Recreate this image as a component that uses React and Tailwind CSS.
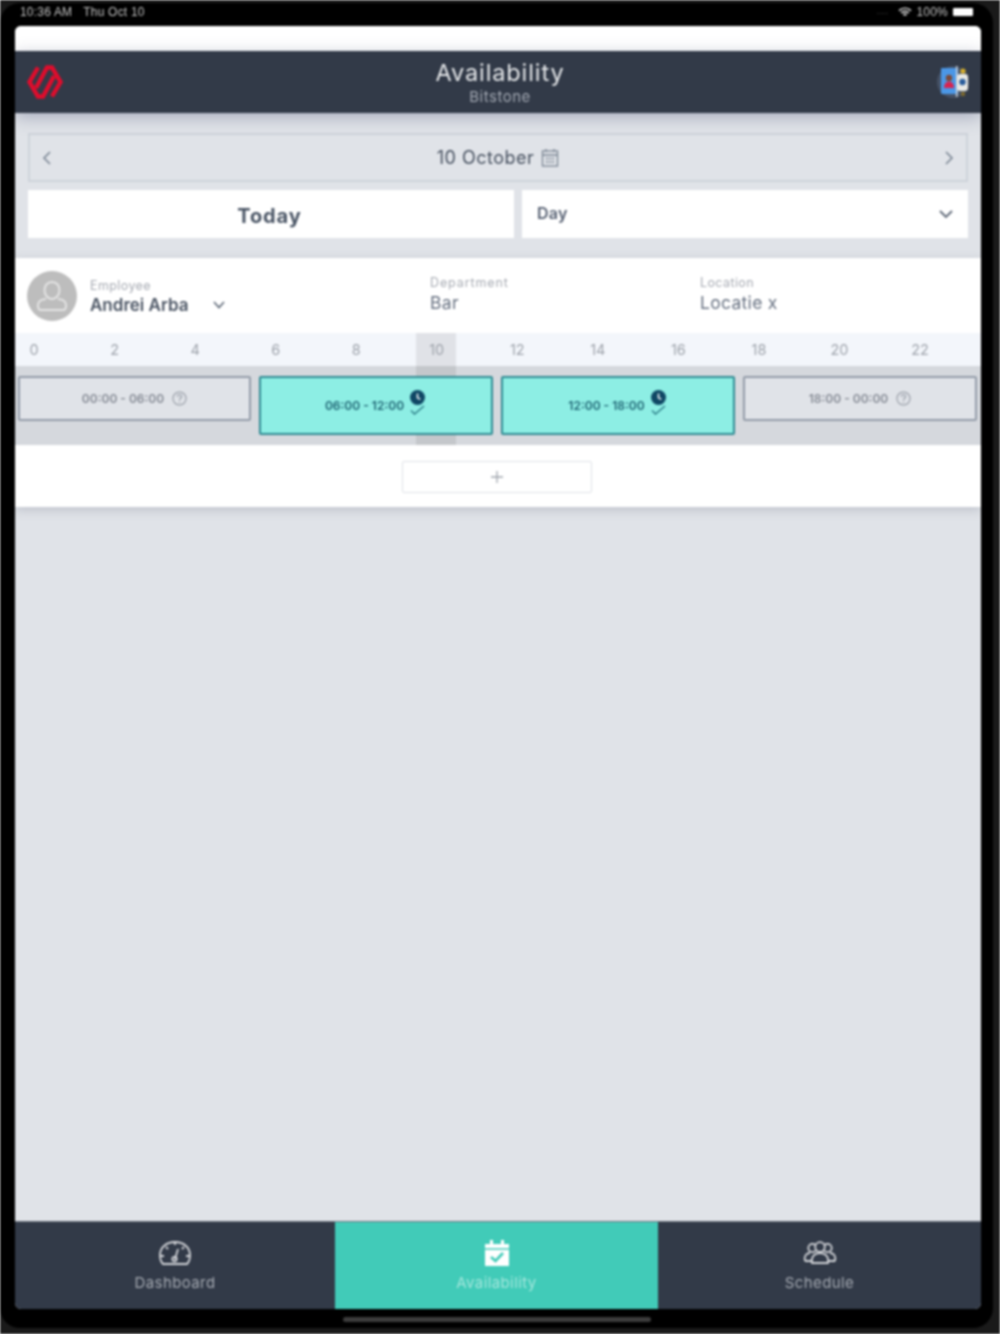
import React from "react";

const font = "font-['Inter','Noto_Sans',sans-serif]";

function Logo() {
  return (
    <svg width="40" height="40" viewBox="26 63 40 40" fill="none" stroke="#e00c2c" strokeWidth="4.400" strokeLinejoin="miter">
      <path d="M39 68.500 L30.500 83 L39 97.500 H44 L55 77" />
      <path d="M53 97.500 L61.500 83 L53 68.500 H48 L37 89" />
    </svg>
  );
}

function AppBadge() {
  return (
    <svg width="36" height="34" viewBox="0 0 36 34">
      <circle cx="17" cy="17" r="16" fill="#465266" />
      <rect x="5" y="3" width="17" height="26" rx="1" fill="#4b97e6" />
      <circle cx="13" cy="13" r="3.200" fill="#7a4a3a" />
      <path d="M8 23c0-4 2-6.500 5-6.500s5 2.500 5 6.500z" fill="#d8234f" />
      <rect x="21" y="9" width="11" height="17" rx="3" fill="#e8e8e4" />
      <circle cx="26.500" cy="17" r="3.200" fill="#2a5d9c" />
      <circle cx="27" cy="6" r="2.600" fill="#d9b02c" />
      <circle cx="27" cy="29" r="2.200" fill="#7f6a2e" />
      <rect x="20" y="1" width="1.500" height="31" fill="#cfd3d8" />
    </svg>
  );
}

function ClockCheck() {
  return (
    <div className="flex flex-col items-center -mt-[6px]">
      <svg width="15" height="15" viewBox="0 0 16 16">
        <circle cx="8" cy="8" r="8" fill="#0f4764" />
        <path d="M8 3.600V8.400L11 10" stroke="#fff" strokeWidth="1.600" fill="none" />
      </svg>
      <svg width="15" height="10" viewBox="0 0 15 10" fill="none" stroke="#2a7a85" strokeWidth="1.300">
        <path d="M1 5.500 L4.500 9 L14 1" />
      </svg>
    </div>
  );
}

function Question() {
  return (
    <svg width="15" height="15" viewBox="0 0 16 16" fill="none" stroke="#8f959f" strokeWidth="1.100">
      <circle cx="8" cy="8" r="7" />
      <path d="M5.800 6.200c0-1.300 1-2.100 2.200-2.100s2.200.8 2.200 2c0 1.600-2.200 1.700-2.200 3.400" />
      <path d="M8 11v1.200" />
    </svg>
  );
}

function GreySlot({ label }) {
  return (
    <div className="h-[45px] bg-[#e0e3e8] border-2 border-[#939ba8] rounded-[2px] flex items-center justify-center gap-2 text-[12px] font-semibold text-[#868b95]">
      <span>{label}</span>
      <Question />
    </div>
  );
}

function TealSlot({ label }) {
  return (
    <div className="h-[59px] bg-[#8deee4] border-2 border-[#2f8a92] rounded-[2px] flex items-center justify-center gap-[6px] text-[12px] font-semibold text-[#1f6473] pr-[2px]">
      <span>{label}</span>
      <ClockCheck />
    </div>
  );
}

function Field({ label, value, width, track }) {
  return (
    <div className={width}>
      <div className={`text-[12.500px] leading-[15px] ${track} text-[#a6aab2]`}>{label}</div>
      <div className="text-[17.500px] leading-[26px] tracking-[0.3px] text-[#667080]">{value}</div>
    </div>
  );
}

const hours = [0, 2, 4, 6, 8, 10, 12, 14, 16, 18, 20, 22];

export default function App() {
  return (
    <div className={`w-[1000px] h-[1334px] bg-[#1a1a1a] pt-[3px] pr-[7px] pb-[6px] overflow-hidden ${font} blur-[0.8px]`}>
      <div className="h-full bg-black rounded-[20px] flex flex-col">
        <div className="h-[23px] pl-[20px] pr-[20px] flex items-center justify-between font-['Liberation_Sans',sans-serif] text-[12px] tracking-[0.2px] text-[#c4c4c4]">
          <div className="flex gap-[11px] -mt-[5px]">
            <span>10:36 AM</span>
            <span>Thu Oct 10</span>
          </div>
          <div className="flex items-center gap-[5px] -mt-[5px]">
            <span className="text-[#555] text-[9px] tracking-wider mr-[4px]">....</span>
            <svg width="14" height="11" viewBox="0 0 14 11" fill="none" stroke="#e5e5e5" strokeWidth="1.600">
              <path d="M1 3.600C4.600.4 9.400.4 13 3.600" />
              <path d="M3.200 5.900C5.600 3.900 8.400 3.900 10.800 5.900" />
              <path d="M5.400 8.100C6.500 7.200 7.500 7.200 8.600 8.100" />
            </svg>
            <span>100%</span>
            <div className="w-[20px] h-[8px] bg-white rounded-[1px]" />
          </div>
        </div>

        <div className="ml-[15px] mr-[12px] h-[1283px] flex flex-col rounded-t-[6px] rounded-b-[6px] overflow-hidden bg-[#e0e3e8]">
          <div className="h-[25px] bg-white shrink-0" />
          <header className="relative z-10 h-[62px] shrink-0 bg-[#323a48] flex items-center pl-[10px] pr-[9px] shadow-[0_4px_16px_rgba(60,70,110,0.35)]">
            <div className="w-[42px]"><Logo /></div>
            <div className="flex-1 text-center pr-[3px] pt-[2px]">
              <div className="text-[23.500px] leading-[28px] tracking-[0.9px] text-[#e6e8ea]">Availability</div>
              <div className="text-[15px] leading-[20px] tracking-[0.5px] text-[#a2a8b2]">Bitstone</div>
            </div>
            <div className="w-[36px]"><AppBadge /></div>
          </header>

          <main className="flex-1 flex flex-col">
            <div className="pt-[20px] pl-[13px] pr-[13px] pb-[20px]">
              <div className="h-[49px] border-2 border-[#ced3da] flex items-center justify-between px-[11px]">
                <svg width="12" height="16" viewBox="0 0 12 16" fill="none" stroke="#7a8593" strokeWidth="1.600"><path d="M9 2 L3 8 L9 14" /></svg>
                <div className="flex items-center gap-[7px] text-[18px] tracking-[0.5px] text-[#46505f]">
                  <span>10 October</span>
                  <svg width="18" height="19" viewBox="0 0 18 19" fill="none" stroke="#7a8593" strokeWidth="1.300">
                    <rect x="1.500" y="3" width="15" height="15" />
                    <path d="M1.500 7H16.500M5 1V4M13 1V4M5 10.500H7M8 10.500H10M11 10.500H13M5 14H7M8 14H10M11 14H13" />
                  </svg>
                </div>
                <svg width="12" height="16" viewBox="0 0 12 16" fill="none" stroke="#7a8593" strokeWidth="1.600"><path d="M3 2 L9 8 L3 14" /></svg>
              </div>
              <div className="mt-[8px] flex gap-[8px] h-[48px]">
                <div className="w-[486px] bg-white flex items-center justify-center text-[20px] font-bold tracking-[0.9px] text-[#4a5565] pt-[3px] pr-[3px]">Today</div>
                <div className="flex-1 bg-white flex items-center justify-between pl-[15px] pr-[14px] text-[16px] tracking-[0.3px] font-semibold text-[#566072]">
                  <span className="-mt-[2px]">Day</span>
                  <svg width="16" height="12" viewBox="0 0 16 12" fill="none" stroke="#5c6675" strokeWidth="1.800"><path d="M2 3 L8 9 L14 3" /></svg>
                </div>
              </div>
            </div>

            <section className="relative bg-white shadow-[0_3px_10px_rgba(90,100,120,0.25)]">
              <div className="h-[75px] flex items-center pl-[12px]">
                <div className="w-[50px] h-[50px] rounded-full bg-[#bdbdbd] flex items-center justify-center shrink-0">
                  <svg width="34" height="34" viewBox="0 0 34 34" fill="none" stroke="#e4e4e4" strokeWidth="2">
                    <path d="M17 3c4.500 0 7.500 3.400 7.500 8s-3 9-7.500 9-7.500-4.400-7.500-9 3-8 7.500-8z" />
                    <path d="M11 20c-5 .5-8 2.500-8 6v1c0 2 1 4 3 4h22c2 0 3-2 3-4v-1c0-3.500-3-5.500-8-6" />
                  </svg>
                </div>
                <div className="w-[340px] ml-[13px] pt-[3px]">
                  <div className="text-[12.500px] leading-[15px] tracking-[0.4px] text-[#a6aab2]">Employee</div>
                  <div className="flex items-center text-[17px] leading-[24px] font-semibold text-[#4a5463]">
                    <span className="w-[122px]">Andrei Arba</span>
                    <svg width="14" height="10" viewBox="0 0 14 10" fill="none" stroke="#5c6675" strokeWidth="1.600"><path d="M2 2 L7 7.500 L12 2" /></svg>
                  </div>
                </div>
                <Field label="Department" value="Bar" width="w-[270px]" track="tracking-[0.9px]" />
                <Field label="Location" value="Locatie x" width="flex-1" track="tracking-[0.4px]" />
              </div>

              <div className="relative">
                <div className="absolute top-0 bottom-0 left-[401px] w-[40px] bg-black/[0.08]" />
                <div className="h-[33px] bg-[#f3f6fb] flex -ml-px">
                  {hours.map((h) => (
                    <div key={h} className="w-[80.550px] shrink-0">
                      <div className="relative w-[40px] h-full flex items-center justify-center text-[14.500px] text-[#9ea3ab]">{h}</div>
                    </div>
                  ))}
                </div>
                <div className="h-[79px] bg-[#d5d8dd] pt-[10px] pl-[3px] grid grid-cols-[233px_234px_234px_234px] gap-[8px] items-start">
                  <div className="relative"><GreySlot label="00:00 - 06:00" /></div>
                  <div className="relative"><TealSlot label="06:00 - 12:00" /></div>
                  <div className="relative"><TealSlot label="12:00 - 18:00" /></div>
                  <div className="relative"><GreySlot label="18:00 - 00:00" /></div>
                </div>
              </div>

              <div className="h-[62px] flex items-center justify-center pt-px">
                <div className="w-[190px] h-[32px] mr-[3px] border border-[#dfe2e7] rounded-[2px] flex items-center justify-center">
                  <svg width="14" height="14" viewBox="0 0 14 14" stroke="#a0a5ad" strokeWidth="1.300"><path d="M7 1V13M1 7H13" /></svg>
                </div>
              </div>
            </section>
          </main>

          <nav className="h-[88px] shrink-0 bg-[#323a48] flex border-t border-[#6f7580] text-[15px] tracking-[0.4px]">
            <div className="w-[320px] flex flex-col items-center pt-[17px] text-[#a4a9b1]">
              <svg width="34" height="28" viewBox="0 0 34 28" fill="none" stroke="#d5d7db" strokeWidth="1.800">
                <path d="M5 25c-2-2-3-6-3-9C2 8 9 3 17 3s15 5 15 13c0 3-1 7-3 9z" />
                <path d="M17 3v3M8 8l2 2M26 8l-2 2M3 17h3M28 17h3M17 20l3-10" />
                <circle cx="16.500" cy="20" r="2.200" />
              </svg>
              <span className="mt-[6px] leading-[20px]">Dashboard</span>
            </div>
            <div className="w-[323px] bg-[#41cbb8] flex flex-col items-center pt-[17px] text-[#a3e6dc]">
              <svg width="28" height="28" viewBox="0 0 28 28">
                <path d="M2 5h5V1h3v4h8V1h3v4h5v22H2z" fill="#fff" />
                <path d="M2 10h24" stroke="#41cbb8" strokeWidth="1.500" />
                <path d="M8 18 L12.500 22 L20 14" stroke="#41cbb8" strokeWidth="2.600" fill="none" />
              </svg>
              <span className="mt-[6px] leading-[20px]">Availability</span>
            </div>
            <div className="flex-1 flex flex-col items-center pt-[17px] text-[#a4a9b1]">
              <svg width="36" height="28" viewBox="0 0 36 28" fill="none" stroke="#d5d7db" strokeWidth="1.800">
                <circle cx="10.500" cy="9" r="4.200" />
                <circle cx="25.500" cy="9" r="4.200" />
                <path d="M3 22c-1-5 1-8 5-8M33 22c1-5-1-8-5-8M3 22h6M27 22h6" />
                <circle cx="18" cy="8" r="4.800" fill="#323a48" />
                <path d="M10 24c-1-7 3-10 8-10s9 3 8 10z" fill="#323a48" />
              </svg>
              <span className="mt-[6px] leading-[20px]">Schedule</span>
            </div>
          </nav>
        </div>

        <div className="flex-1 pl-[343px]">
          <div className="mt-[8px] w-[308px] h-[5px] rounded-full bg-[#3c3c3c]" />
        </div>
      </div>
    </div>
  );
}
